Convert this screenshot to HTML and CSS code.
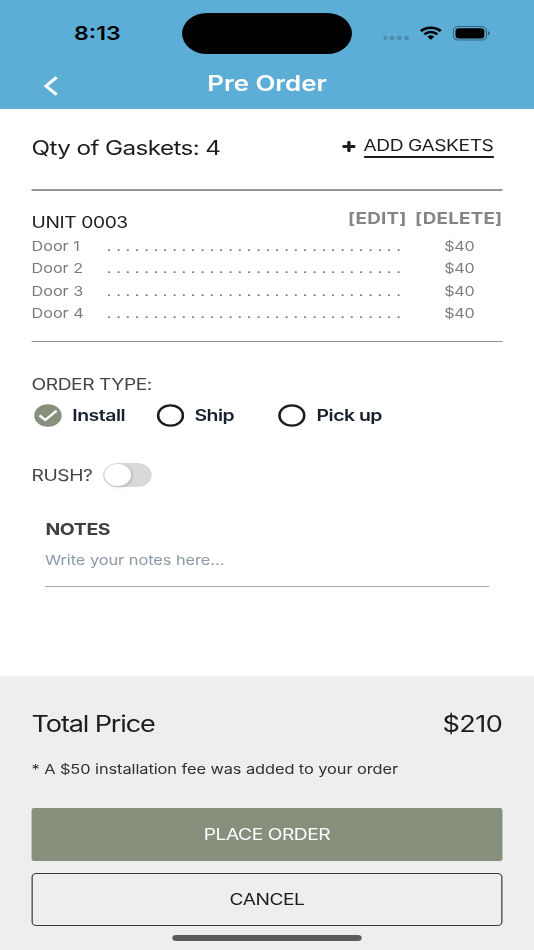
FILE: index.html
```html
<!DOCTYPE html>
<html lang="en">
<head>
<meta charset="utf-8">
<title>Pre Order</title>
<link rel="stylesheet" href="styles.css">
</head>
<body>
<div class="screen">
  <header class="header">
    <div class="status">
      <span class="time">8:13</span>
      <span class="island"></span>
      <span class="dots"><i></i><i></i><i></i><i></i></span>
      <svg class="wifi" viewBox="0 0 18 14" width="18" height="14"><g fill="none" stroke="#000" stroke-width="2.5"><path d="M.8 5.200a11.600 11.600 0 0 1 16.400 0"/><path d="M3.700 8.300a7.500 7.500 0 0 1 10.600 0"/></g><path d="M9 13.700 6.100 10.800a4.100 4.100 0 0 1 5.800 0z"/></svg>
      <svg class="battery" viewBox="0 0 31 15" width="31" height="15"><rect x=".5" y=".5" width="27.400" height="13.600" rx="4.200" fill="none" stroke="#000" stroke-opacity=".42"/><rect x="2.300" y="2.200" width="23.800" height="10.200" rx="2.900"/><path d="M29.200 5v4.400c.9-.4 1.300-1.300 1.300-2.200S30.100 5.400 29.200 5z" fill-opacity=".5"/></svg>
    </div>
    <div class="nav">
      <svg class="back" viewBox="0 0 12 20" width="12" height="20"><path d="M10.700 1.200 1.900 10.100l8.800 8.700" fill="none" stroke="#fff" stroke-width="2.800"/></svg>
      <h1 class="title">Pre Order</h1>
    </div>
  </header>
  <main class="main">
    <section class="summary">
      <span class="qty">Qty of Gaskets: 4</span>
      <svg class="plus" viewBox="0 0 11 11" width="11" height="11"><path d="M5.500 1.300v8.400M1.200 5.500h8.600" stroke="#1d1d1d" stroke-width="2.800" stroke-linecap="round"/></svg>
      <a class="add">ADD GASKETS</a>
    </section>
    <section class="unit">
      <div class="unit-head"><span class="unit-name">UNIT 0003</span><span class="edit">[EDIT]</span><span class="delete">[DELETE]</span></div>
      <div class="row"><span class="door">Door 1</span><span class="leader">. . . . . . . . . . . . . . . . . . . . . . . . . . . . . . . .</span><span class="price">$40</span></div>
      <div class="row"><span class="door">Door 2</span><span class="leader">. . . . . . . . . . . . . . . . . . . . . . . . . . . . . . . .</span><span class="price">$40</span></div>
      <div class="row"><span class="door">Door 3</span><span class="leader">. . . . . . . . . . . . . . . . . . . . . . . . . . . . . . . .</span><span class="price">$40</span></div>
      <div class="row"><span class="door">Door 4</span><span class="leader">. . . . . . . . . . . . . . . . . . . . . . . . . . . . . . . .</span><span class="price">$40</span></div>
    </section>
    <div class="label order-label">ORDER TYPE:</div>
    <div class="options">
      <div class="option"><svg class="radio" viewBox="0 0 23 23" width="23" height="23"><circle cx="11.500" cy="11.500" r="11.300" fill="#87907d"/><path d="M4.500 11.400 9.300 16 18.600 6.800" fill="none" stroke="#fff" stroke-width="2.300"/></svg><span>Install</span></div>
      <div class="option"><svg class="radio" viewBox="0 0 23 23" width="23" height="23"><circle cx="11.500" cy="11.500" r="10.200" fill="none" stroke="#1d1d1d" stroke-width="2.200"/></svg><span>Ship</span></div>
      <div class="option"><svg class="radio" viewBox="0 0 23 23" width="23" height="23"><circle cx="11.500" cy="11.500" r="10.200" fill="none" stroke="#1d1d1d" stroke-width="2.200"/></svg><span>Pick up</span></div>
    </div>
    <div class="rush"><span class="label rush-label">RUSH?</span><span class="toggle"><i class="knob"></i></span></div>
    <div class="notes">
      <div class="notes-title">NOTES</div>
      <div class="placeholder">Write your notes here...</div>
    </div>
  </main>
  <footer class="footer">
    <div class="total"><span class="total-label">Total Price</span><span class="amount">$210</span></div>
    <div class="fee">* A $50 installation fee was added to your order</div>
    <button class="btn place">PLACE ORDER</button>
    <button class="btn cancel">CANCEL</button>
    <div class="home"></div>
  </footer>
</div>
</body>
</html>
```
FILE: styles.css
```css
* { box-sizing: border-box; }
html, body { margin: 0; width: 534px; height: 950px; overflow: hidden; }
body { font-family: Inter, "Liberation Sans", sans-serif; background: #fff; color: #1d1d1d; }
/* Wide proportions: a 440px layout stretched to the full width */
.screen { width: 440px; height: 950px; display: flex; flex-direction: column; transform: scaleX(1.21364); transform-origin: 0 0; white-space: nowrap; }
svg { display: block; flex: none; }

.header { height: 109px; background: #5caed6; }
.status { height: 66px; display: flex; align-items: center; color: #000; }
.time { width: 88.500px; padding-left: 61px; font-size: 19px; font-weight: 600; flex: none; }
.island { flex: none; width: 140px; height: 41px; border-radius: 21px; background: #000; margin-left: 61.500px; margin-top: 1px; }
.dots { display: flex; gap: 2.200px; margin: 10px 9.200px 0 25.500px; }
.dots i { width: 3.800px; height: 3.800px; border-radius: 1.200px; background: #4c8fb0; }
.battery { margin-left: 8.700px; }
.nav { height: 43px; position: relative; display: flex; justify-content: center; }
.back { position: absolute; left: 35.500px; top: 10px; }
.title { margin: 4px 0 0; font-size: 21.300px; line-height: 27px; font-weight: 600; color: #fff; }

.main { height: 567px; padding: 0 26px; }
.summary { height: 82px; border-bottom: 2px solid #979797; display: flex; padding-top: 26px; }
.qty { font-size: 20px; line-height: 26px; width: 256px; letter-spacing: -.51px; }
.plus { margin-top: 6px; }
.add { font-size: 15.800px; line-height: 22px; height: 23px; border-bottom: 2px solid #1d1d1d; margin-left: 6.500px; letter-spacing: -.36px; }
.unit { height: 151px; border-bottom: 1px solid #929292; padding-top: 16px; }
.unit-head { height: 28px; display: flex; }
.unit-name { font-size: 15.800px; line-height: 31px; flex: 1; letter-spacing: -.32px; }
.edit, .delete { font-size: 15.500px; line-height: 24px; font-weight: 700; color: #858585; letter-spacing: .18px; }
.delete { margin-left: 7px; }
.row { height: 22.330px; line-height: 23px; display: flex; font-size: 13.300px; color: #7b7b7b; letter-spacing: 0; }
.door { width: 62px; }
.leader { width: 243px; letter-spacing: .06px; }
.price { margin-left: 35px; letter-spacing: -.2px; }
.label { font-size: 15.800px; color: #444; letter-spacing: -.36px; }
.order-label { line-height: 24px; margin-top: 31px; }
.options { display: flex; margin-top: 7px; padding-left: 2px; }
.option { width: 100.600px; display: flex; align-items: center; gap: 8.600px; font-size: 16px; line-height: 23px; font-weight: 600; color: #17202d; flex: none; letter-spacing: -.4px; }
.rush { height: 25px; margin-top: 35.500px; display: flex; align-items: center; }
.rush-label { width: 59px; }
.toggle { width: 40px; height: 24px; border-radius: 12px; background: #d9d9d9; padding: 1px; }
.knob { display: block; width: 22px; height: 22px; border-radius: 50%; background: #fff; box-shadow: 1px 1px 3px rgba(0,0,0,.18); }
.notes { margin: 29px 11px 0; height: 70px; border-bottom: 1.500px solid #aaa; }
.notes-title { font-size: 16px; line-height: 24px; font-weight: 700; color: #404040; letter-spacing: -.3px; padding-left: .4px; }
.placeholder { font-size: 13.500px; line-height: 20px; margin-top: 9px; color: #8c98a5; letter-spacing: -.05px; }

.footer { height: 274px; background: #eee; padding: 0 26px; }
.total { display: flex; justify-content: space-between; font-size: 22.300px; line-height: 30px; padding-top: 33px; }
.total-label { letter-spacing: -.93px; }
.amount { letter-spacing: -.4px; }
.fee { font-size: 13.500px; line-height: 20px; margin-top: 20px; letter-spacing: -.07px; color: #303030; }
.btn { display: block; width: 388px; height: 53px; border-radius: 2px; border: 0; padding: 0 0 1px; font: 400 15.800px Inter, "Liberation Sans", sans-serif; letter-spacing: -.36px; }
.place { margin-top: 29.400px; background: #87907d; color: #fff; }
.cancel { margin-top: 12px; border: 1.500px solid #3a3a3a; border-radius: 4px; background: transparent; color: #1d1d1d; }
.home { width: 156.500px; height: 5.500px; border-radius: 3px; background: #5c5c5c; margin: 9px auto 0; position: relative; }
```
